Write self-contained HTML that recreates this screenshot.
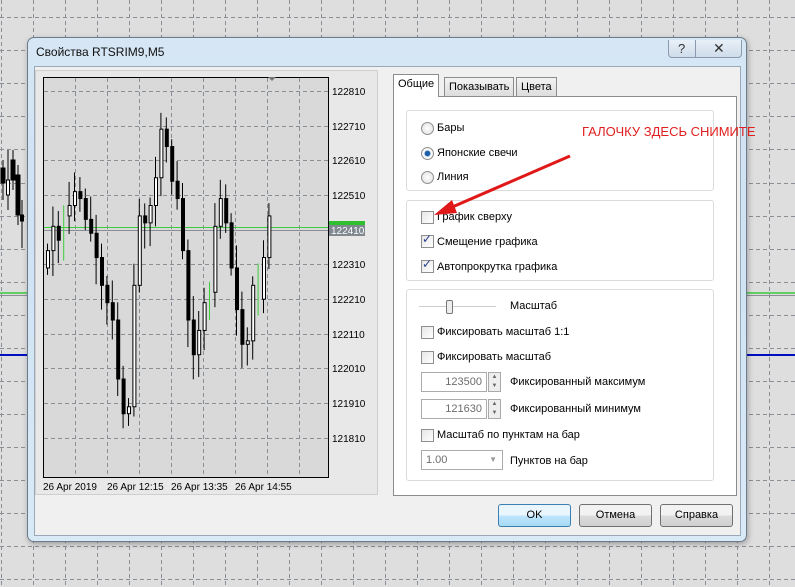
<!DOCTYPE html>
<html><head><meta charset="utf-8"><style>
*{box-sizing:border-box}
body{margin:0;width:795px;height:587px;overflow:hidden;background:#dedede;font-family:"Liberation Sans",sans-serif;font-size:11px;color:#000;position:relative}
.abs{position:absolute}
.dlg{left:27px;top:37px;width:720px;height:505px;border:1px solid #6d7b8c;border-radius:7px;background:linear-gradient(#d6e6f5,#cfe3f3 40%,#d9eaf7);box-shadow:1px 2px 6px rgba(0,0,0,.3)}
.title{left:8px;top:7px;font-size:12px;color:#111}
.inner{left:6px;top:28px;width:707px;height:470px;background:#f0f0f0;border:1px solid #9aa8b8}
.grp{position:absolute;border:1px solid #dcdcdc;border-radius:3px;background:#fff}
.cb{position:absolute;width:13px;height:13px;border:1px solid #8f8f8f;background:linear-gradient(135deg,#e6e6e6,#fff)}
.rd{position:absolute;width:13px;height:13px;border:1px solid #8f8f8f;border-radius:50%;background:radial-gradient(#fff,#ddd)}
.lbl{position:absolute;font-size:11px;white-space:nowrap}
.btn{position:absolute;height:23px;border:1px solid #707070;border-radius:3px;background:linear-gradient(#f2f2f2 50%,#dcdcdc 50%,#d0d0d0);text-align:center;line-height:21px;font-size:11px}
.tab{position:absolute;top:77px;height:20px;border:1px solid #8c8c8c;border-bottom:none;background:linear-gradient(#f2f2f2,#dcdcdc);line-height:18px;padding:0 4px;font-size:11px}
.in{position:absolute;height:20px;border:1px solid #ababab;background:#fff;color:#6d6d6d;font-size:11px;line-height:18px;padding:0 4px}
</style></head><body>
<svg class="abs" style="left:0;top:0" width="795" height="587">
<g stroke="#8a8f96" stroke-dasharray="4,3" stroke-width="1">
<line x1="0" y1="17.5" x2="795" y2="17.5"/><line x1="0" y1="50.5" x2="795" y2="50.5"/><line x1="0" y1="83.5" x2="795" y2="83.5"/><line x1="0" y1="116.5" x2="795" y2="116.5"/><line x1="0" y1="149.5" x2="795" y2="149.5"/><line x1="0" y1="183.5" x2="795" y2="183.5"/><line x1="0" y1="216.5" x2="795" y2="216.5"/><line x1="0" y1="249.5" x2="795" y2="249.5"/><line x1="0" y1="282.5" x2="795" y2="282.5"/><line x1="0" y1="315.5" x2="795" y2="315.5"/><line x1="0" y1="348.5" x2="795" y2="348.5"/><line x1="0" y1="381.5" x2="795" y2="381.5"/><line x1="0" y1="414.5" x2="795" y2="414.5"/><line x1="0" y1="447.5" x2="795" y2="447.5"/><line x1="0" y1="480.5" x2="795" y2="480.5"/><line x1="0" y1="513.5" x2="795" y2="513.5"/><line x1="0" y1="546.5" x2="795" y2="546.5"/><line x1="0" y1="579.5" x2="795" y2="579.5"/>
<line x1="1.5" y1="0" x2="1.5" y2="587"/><line x1="33.5" y1="0" x2="33.5" y2="587"/><line x1="65.5" y1="0" x2="65.5" y2="587"/><line x1="97.5" y1="0" x2="97.5" y2="587"/><line x1="129.5" y1="0" x2="129.5" y2="587"/><line x1="161.5" y1="0" x2="161.5" y2="587"/><line x1="193.5" y1="0" x2="193.5" y2="587"/><line x1="225.5" y1="0" x2="225.5" y2="587"/><line x1="257.5" y1="0" x2="257.5" y2="587"/><line x1="289.5" y1="0" x2="289.5" y2="587"/><line x1="321.5" y1="0" x2="321.5" y2="587"/><line x1="353.5" y1="0" x2="353.5" y2="587"/><line x1="385.5" y1="0" x2="385.5" y2="587"/><line x1="417.5" y1="0" x2="417.5" y2="587"/><line x1="449.5" y1="0" x2="449.5" y2="587"/><line x1="481.5" y1="0" x2="481.5" y2="587"/><line x1="513.5" y1="0" x2="513.5" y2="587"/><line x1="545.5" y1="0" x2="545.5" y2="587"/><line x1="577.5" y1="0" x2="577.5" y2="587"/><line x1="609.5" y1="0" x2="609.5" y2="587"/><line x1="641.5" y1="0" x2="641.5" y2="587"/><line x1="673.5" y1="0" x2="673.5" y2="587"/><line x1="705.5" y1="0" x2="705.5" y2="587"/><line x1="737.5" y1="0" x2="737.5" y2="587"/><line x1="769.5" y1="0" x2="769.5" y2="587"/>
</g>
<line x1="0" y1="295.5" x2="795" y2="295.5" stroke="#8a8f96"/><line x1="0" y1="293" x2="795" y2="293" stroke="#3ccc3c" stroke-width="1.5"/>
<line x1="0" y1="355" x2="795" y2="355" stroke="#0010c0" stroke-width="2"/>
<g stroke="#000" fill="#000"><line x1="3" y1="160" x2="3" y2="200"/><rect x="1" y="168" width="4" height="15"/><line x1="8" y1="150" x2="8" y2="210"/><rect x="6.5" y="180" width="3" height="15" fill="#fff"/><line x1="13" y1="150" x2="13" y2="190"/><rect x="11" y="160" width="4" height="20"/><line x1="18" y1="165" x2="18" y2="225"/><rect x="16" y="175" width="4" height="40"/><line x1="22" y1="200" x2="22" y2="248"/><rect x="20.5" y="215" width="3" height="6"/></g>
</svg>
<div class="abs dlg">
<div class="abs title">Свойства RTSRIM9,M5</div>
<div class="abs" style="left:640px;top:2px;width:74px;height:18px;border:1px solid #8a99ab;border-top:none;border-radius:0 0 4px 4px;background:linear-gradient(#e8f0f8,#cfdcea)"><span class="abs" style="left:9px;top:1px;font-size:13px;color:#333">?</span><span class="abs" style="left:26px;top:0;width:1px;height:17px;background:#8a99ab"></span><span class="abs" style="left:44px;top:0;font-size:14px;color:#333">✕</span></div>
<div class="abs inner"></div>
</div>
<div class="abs" style="left:35px;top:70px;width:343px;height:425px;background:#e8e8e8;border:1px solid #cfcfcf"></div>
<svg class="abs" style="left:35px;top:70px" width="343" height="425" id="ch">
<rect x="8.5" y="7.5" width="285" height="400" style="fill:#d9d9d9" stroke="#000"/>
<g stroke="#8a8f96" stroke-dasharray="4,3">
<line x1="40.5" y1="8" x2="40.5" y2="407"/><line x1="72.5" y1="8" x2="72.5" y2="407"/><line x1="104.5" y1="8" x2="104.5" y2="407"/><line x1="136.5" y1="8" x2="136.5" y2="407"/><line x1="168.5" y1="8" x2="168.5" y2="407"/><line x1="200.5" y1="8" x2="200.5" y2="407"/><line x1="232.5" y1="8" x2="232.5" y2="407"/><line x1="264.5" y1="8" x2="264.5" y2="407"/>
<line x1="9" y1="21.5" x2="293" y2="21.5"/><line x1="9" y1="56.5" x2="293" y2="56.5"/><line x1="9" y1="90.5" x2="293" y2="90.5"/><line x1="9" y1="125.5" x2="293" y2="125.5"/><line x1="9" y1="194.5" x2="293" y2="194.5"/><line x1="9" y1="229.5" x2="293" y2="229.5"/><line x1="9" y1="264.5" x2="293" y2="264.5"/><line x1="9" y1="298.5" x2="293" y2="298.5"/><line x1="9" y1="333.5" x2="293" y2="333.5"/><line x1="9" y1="368.5" x2="293" y2="368.5"/>
</g>
<line x1="9" y1="157.5" x2="293" y2="157.5" stroke="#3ccc3c"/><line x1="9" y1="160.5" x2="293" y2="160.5" stroke="#8a8f96"/>
<polygon points="233,7 241,7 237,11" fill="#777"/>
<g id="cd"></g>
<g font-size="10" fill="#000" font-family="Liberation Sans">
<text x="297" y="25">122810</text><text x="297" y="60">122710</text><text x="297" y="94">122610</text><text x="297" y="129">122510</text><text x="297" y="198">122310</text><text x="297" y="233">122210</text><text x="297" y="268">122110</text><text x="297" y="302">122010</text><text x="297" y="337">121910</text><text x="297" y="372">121810</text>
<rect x="294" y="151" width="36" height="8" fill="#2fbf2f"/><rect x="294" y="155" width="36" height="11" fill="#808890"/><text x="296" y="164" fill="#fff">122410</text>
<text x="8" y="420">26 Apr 2019</text><text x="72" y="420">26 Apr 12:15</text><text x="136" y="420">26 Apr 13:35</text><text x="200" y="420">26 Apr 14:55</text>
</g>
</svg>
<script>
var c=[122350,122420,122380,122450,122480,122520,122500,122440,122400,122330,122250,122200,122150,121980,121880,121900,122250,122450,122430,122480,122560,122700,122650,122550,122500,122350,122150,122050,122120,122200,122230,122420,122500,122430,122300,122180,122080,122090,122250,122210,122330,122450];
var y=p=>21+(122810-p)*0.347,s='',o=122300;
c.forEach((v,i)=>{var x=11+i*5.4,h=Math.max(o,v)+20+(i*37%50),l=Math.min(o,v)-20-(i*53%60);
var g=(i==3||i==30||i==39);var col=g?'#3ccc3c':'#000';
s+='<line x1="'+(x+1.5)+'" y1="'+y(h)+'" x2="'+(x+1.5)+'" y2="'+y(l)+'" stroke="'+col+'"/>';
var t=y(Math.max(o,v)),b=y(Math.min(o,v));
if(!g)s+='<rect x="'+(x+.5)+'" y="'+t+'" width="3" height="'+Math.max(1,b-t)+'" fill="'+(v>o?'#fff':'#000')+'" stroke="#000"/>';
o=v;});
document.getElementById('cd').innerHTML=s;
</script>
<div class="tab" style="left:393px;top:74px;height:23px;background:#fff;z-index:2">Общие</div>
<div class="tab" style="left:444px">Показывать</div>
<div class="tab" style="left:516px">Цвета</div>
<div class="abs" style="left:393px;top:96px;width:344px;height:400px;background:#fff;border:1px solid #8c8c8c"></div>
<div class="grp" style="left:406px;top:110px;width:308px;height:81px"></div>
<div class="grp" style="left:406px;top:200px;width:308px;height:81px"></div>
<div class="grp" style="left:406px;top:289px;width:308px;height:192px"></div>
<div class="rd" style="left:421px;top:122px"></div><div class="lbl" style="left:437px;top:122px">Бары</div>
<div class="rd" style="left:421px;top:147px;background:radial-gradient(#1b5fa8 30%,#fff 45%,#ddd)"></div><div class="lbl" style="left:437px;top:147px">Японские свечи</div>
<div class="rd" style="left:421px;top:171px"></div><div class="lbl" style="left:437px;top:171px">Линия</div>
<div class="cb" style="left:421px;top:211px"></div><div class="lbl" style="left:437px;top:211px">График сверху</div>
<div class="cb" style="left:421px;top:235px"></div><div class="lbl" style="left:437px;top:236px">Смещение графика</div><div class="lbl" style="left:422px;top:232px;color:#2a3f8f;font-size:12px">✓</div>
<div class="cb" style="left:421px;top:260px"></div><div class="lbl" style="left:437px;top:261px">Автопрокрутка графика</div><div class="lbl" style="left:422px;top:257px;color:#2a3f8f;font-size:12px">✓</div>
<div class="abs" style="left:419px;top:306px;width:77px;height:2px;background:#ccc;border-bottom:1px solid #fff"></div>
<div class="abs" style="left:446px;top:300px;width:7px;height:14px;border:1px solid #777;border-radius:2px;background:#eee"></div>
<div class="lbl" style="left:510px;top:300px">Масштаб</div>
<div class="cb" style="left:421px;top:326px"></div><div class="lbl" style="left:437px;top:326px">Фиксировать масштаб 1:1</div>
<div class="cb" style="left:421px;top:351px"></div><div class="lbl" style="left:437px;top:351px">Фиксировать масштаб</div>
<div class="in" style="left:421px;top:372px;width:66px;text-align:right">123500</div><div class="abs" style="left:488px;top:372px;width:13px;height:20px;border:1px solid #aaa;background:#eee;font-size:6px;color:#666;text-align:center;line-height:9px">▲<br>▼</div>
<div class="lbl" style="left:510px;top:376px">Фиксированный максимум</div>
<div class="in" style="left:421px;top:399px;width:66px;text-align:right">121630</div><div class="abs" style="left:488px;top:399px;width:13px;height:20px;border:1px solid #aaa;background:#eee;font-size:6px;color:#666;text-align:center;line-height:9px">▲<br>▼</div>
<div class="lbl" style="left:510px;top:403px">Фиксированный минимум</div>
<div class="cb" style="left:421px;top:429px"></div><div class="lbl" style="left:437px;top:429px">Масштаб по пунктам на бар</div>
<div class="in" style="left:421px;top:450px;width:82px">1.00<span style="position:absolute;right:5px;top:0;font-size:8px;color:#999">▼</span></div>
<div class="lbl" style="left:510px;top:455px">Пунктов на бар</div>
<div class="btn" style="left:498px;top:504px;width:73px;border-color:#3c7fb1;background:linear-gradient(#eaf6fd 50%,#bee6fd 50%,#a7d9f5)">OK</div>
<div class="btn" style="left:579px;top:504px;width:73px">Отмена</div>
<div class="btn" style="left:660px;top:504px;width:73px">Справка</div>
<div class="lbl" style="left:582px;top:124px;color:#e02020;font-size:13px">ГАЛОЧКУ ЗДЕСЬ СНИМИТЕ</div>
<svg class="abs" style="left:0;top:0" width="795" height="587"><line x1="570" y1="156" x2="450" y2="208" stroke="#e01818" stroke-width="3"/><polygon points="434,215 452,200 457,213" fill="#e01818"/></svg>
</body></html>
